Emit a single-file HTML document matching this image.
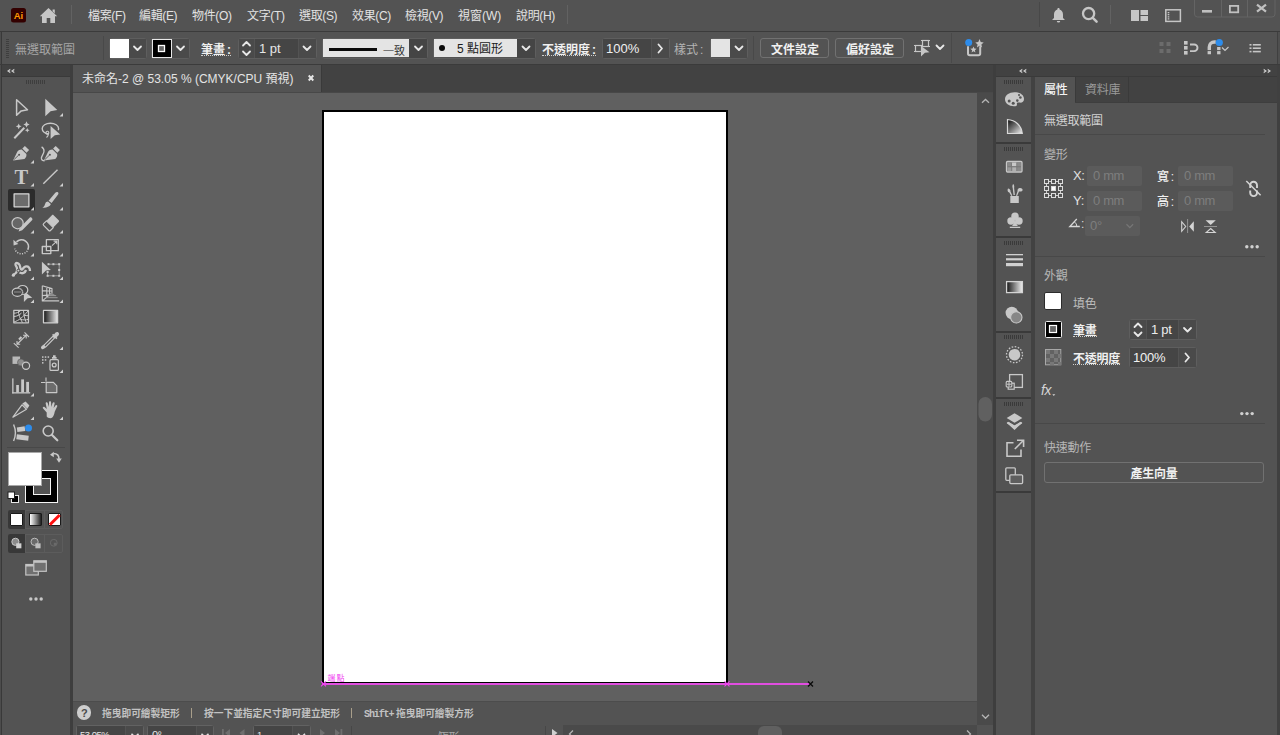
<!DOCTYPE html>
<html lang="zh-Hant">
<head>
<meta charset="utf-8">
<title>未命名-2 @ 53.05 % (CMYK/CPU 預視)</title>
<style>
*{box-sizing:border-box;margin:0;padding:0}
html,body{width:1280px;height:735px;overflow:hidden;background:#535353}
body{position:relative;font-family:"Liberation Sans","Noto Sans CJK TC",sans-serif;font-size:12px;color:#dddddd;line-height:1}
.a{position:absolute}
.t{position:absolute;white-space:nowrap;line-height:14px;height:14px}
svg{position:absolute;overflow:visible}
.sep{position:absolute;width:1px;background:#454545}
.b{font-weight:bold;color:#f0f0f0}
.du{border-bottom:1px dotted #d0d0d0}
.fld{position:absolute;background:#454545}
.btn{position:absolute;background:#4a4a4a}
.grp{position:absolute;border:1px solid #5e5e5e;border-radius:3px}
.chev{position:absolute}
.m{top:9px;color:#e2e2e2;font-size:12px;line-height:15px;height:15px;letter-spacing:-0.35px}
.c{top:43px;font-size:12px}
.du{height:13px}
.col{margin-left:2px}
.cb{border:1px solid #717171;border-radius:3px}
.h{top:707px;font-size:9.72px;font-weight:bold;color:#c2c2c2;line-height:14px}
.s{top:728px;font-size:9.5px;letter-spacing:-0.5px;color:#e6e6e6;line-height:14px}
.st{border:1px solid #626262;border-radius:3px}
.gap{left:996px;width:35px;height:2px;background:#3a3a3a}
.grip{left:1004px;width:20px;height:4px;background:repeating-linear-gradient(to right,#3a3a3a 0,#3a3a3a 1px,transparent 1px,transparent 2px)}
.p{font-size:12px;letter-spacing:-.25px}
.dv{left:1035px;width:230px;height:1px;background:#484848}
.pf{width:55px;height:20px;background:#5b5b5b;border-radius:2px}
.pv{font-size:13px;color:#7e7e7e;letter-spacing:-.35px}
/*SECTIONS*/
</style>
</head>
<body>
<!-- base frames -->
<div class="a" id="menubar" style="left:0;top:0;width:1280px;height:31px;background:#535353"></div>
<div class="a" style="left:0;top:31px;width:1280px;height:1px;background:#3b3b3b"></div>
<div class="a" style="left:0;top:32px;width:1px;height:703px;background:#4c4c4c"></div><div class="a" style="left:1px;top:32px;width:1px;height:703px;background:#393939"></div>
<div class="a" style="left:1277px;top:32px;width:3px;height:703px;background:#404040"></div><div class="a" style="left:1278px;top:32px;width:2px;height:32px;background:#4f4f4f"></div>
<div class="a" id="ctrlbar" style="left:2px;top:32px;width:1275px;height:32px;background:#535353"></div>
<div class="a" style="left:0;top:64px;width:1280px;height:1px;background:#3b3b3b"></div>

<!-- left toolbar -->
<div class="a" style="left:2px;top:65px;width:68px;height:11px;background:#424242"></div>
<div class="a" style="left:2px;top:76px;width:68px;height:1px;background:#3a3a3a"></div>
<div class="a" id="tools" style="left:2px;top:77px;width:68px;height:658px;background:#535353"></div>
<div class="a" style="left:70px;top:65px;width:3px;height:670px;background:#3e3e3e"></div>

<!-- document area -->
<div class="a" style="left:73px;top:65px;width:920px;height:27px;background:#424242"></div>
<div class="a" style="left:73px;top:65px;width:248px;height:27px;background:#535353"></div>
<div class="a" style="left:321px;top:65px;width:1px;height:27px;background:#3a3a3a"></div>
<div class="a" style="left:73px;top:92px;width:920px;height:1px;background:#484848"></div>
<div class="a" id="canvas" style="left:73px;top:93px;width:904px;height:608px;background:#606060"></div>
<div class="a" style="left:977px;top:93px;width:16px;height:632px;background:#4a4a4a"></div>
<div class="a" style="left:73px;top:701px;width:904px;height:1px;background:#4c4c4c"></div>
<div class="a" id="hint" style="left:73px;top:702px;width:904px;height:23px;background:#535353"></div>
<div class="a" id="status" style="left:73px;top:725px;width:904px;height:10px;background:#535353"></div>
<div class="a" style="left:563px;top:725px;width:414px;height:10px;background:#4a4a4a"></div>
<div class="a" style="left:977px;top:725px;width:16px;height:10px;background:#535353"></div>

<!-- artboard -->
<div class="a" style="left:322px;top:110px;width:406px;height:574px;background:#000"></div>
<div class="a" style="left:324px;top:112px;width:402px;height:570px;background:#fff"></div>
<div class="a" style="left:322px;top:682.500px;width:489px;height:2.500px;background:#e04ee0"></div>

<!-- right dock -->
<div class="a" style="left:993px;top:65px;width:3px;height:670px;background:#3e3e3e"></div>
<div class="a" style="left:996px;top:65px;width:281px;height:11px;background:#424242"></div>
<div class="a" style="left:996px;top:76px;width:281px;height:1px;background:#3a3a3a"></div>
<div class="a" id="iconcol" style="left:996px;top:77px;width:35px;height:658px;background:#535353"></div>
<div class="a" style="left:1031px;top:77px;width:4px;height:658px;background:#424242"></div>
<div class="a" id="panel" style="left:1035px;top:77px;width:242px;height:658px;background:#535353"></div>
<div class="a" style="left:1075px;top:77px;width:202px;height:25px;background:#424242"></div>
<div class="a" style="left:1075px;top:77px;width:1px;height:25px;background:#3a3a3a"></div>
<div class="a" style="left:1128px;top:77px;width:1px;height:25px;background:#3a3a3a"></div>
<div class="a" style="left:1075px;top:102px;width:202px;height:1px;background:#3e3e3e"></div>

<!--MENUBAR-->
<div id="menu">
<span class="t m" id="m1" style="left:88px">檔案(F)</span>
<span class="t m" id="m2" style="left:139px">編輯(E)</span>
<span class="t m" id="m3" style="left:192px">物件(O)</span>
<span class="t m" id="m4" style="left:247px">文字(T)</span>
<span class="t m" id="m5" style="left:299px">選取(S)</span>
<span class="t m" id="m6" style="left:352px">效果(C)</span>
<span class="t m" id="m7" style="left:405px">檢視(V)</span>
<span class="t m" id="m8" style="left:458px;letter-spacing:0">視窗(W)</span>
<span class="t m" id="m9" style="left:516px">說明(H)</span>
</div>
<div class="sep" style="left:71px;top:5px;height:19px;background:#626262"></div>
<div class="sep" style="left:567px;top:5px;height:19px;background:#626262"></div>
<div class="sep" style="left:1039px;top:2px;height:25px;background:#484848"></div>
<div class="sep" style="left:1110px;top:5px;height:19px;background:#626262"></div>
<svg width="1280" height="32" viewBox="0 0 1280 32" style="left:0;top:0">
 <rect x="11" y="8" width="15" height="14.5" rx="2.5" fill="#330000"/>
 <text x="18.5" y="18.8" font-family="Liberation Sans, sans-serif" font-size="9.5" font-weight="bold" fill="#ff9a00" text-anchor="middle">Ai</text>
 <path d="M48.5 8 L57.2 16.2 L55 16.2 L55 23 L50.3 23 L50.3 18 L46.7 18 L46.7 23 L42 23 L42 16.2 L39.8 16.2 Z M52.6 9.6 h2.2 v3.8 l-2.2 -2.1z" fill="#c6c6c6"/>
 <!-- bell -->
 <path d="M1058.5 8 c.7 0 1.1 .5 1.1 1.1 v.5 c2.3 .7 3.4 2.7 3.4 5 v3.3 l1.6 1.6 v.6 h-12.2 v-.6 l1.6 -1.6 v-3.3 c0 -2.3 1.1 -4.3 3.4 -5 v-.5 c0 -.6 .4 -1.1 1.1 -1.1z M1056.8 20.9 h3.4 a1.7 1.5 0 0 1 -3.4 0z" fill="#c6c6c6"/>
 <!-- search -->
 <circle cx="1088.6" cy="13.6" r="5.600" fill="none" stroke="#c6c6c6" stroke-width="2.300"/>
 <path d="M1092.8 17.8 L1096.600 21.600" stroke="#c6c6c6" stroke-width="2.500" stroke-linecap="round"/>
 <!-- arrange -->
 <rect x="1131" y="10" width="8" height="11" fill="#c6c6c6"/>
 <rect x="1140.5" y="10" width="7.5" height="5" fill="#c6c6c6"/>
 <rect x="1140.5" y="16" width="7.5" height="5" fill="#c6c6c6"/>
 <!-- workspace -->
 <rect x="1165.8" y="9.8" width="14.6" height="11.6" fill="none" stroke="#c6c6c6" stroke-width="1.5"/>
 <path d="M1168.5 12 v7.5" stroke="#c6c6c6" stroke-width="1.6" stroke-dasharray="1.2 0.9"/>
 <!-- window controls -->
 <path d="M1194.5 -1 V14 a3 3 0 0 0 3 3 H1272 a3 3 0 0 0 3 -3 V-1" fill="none" stroke="#646464" stroke-width="1"/>
 <path d="M1221.5 0 V17 M1247.5 0 V17" stroke="#646464" stroke-width="1"/>
 <rect x="1202" y="10" width="10" height="2.6" fill="#c0c0c0"/>
 <rect x="1229.9" y="5.9" width="8.300" height="6.400" fill="none" stroke="#c0c0c0" stroke-width="1.800"/>
 <path d="M1257 4.6 L1266 11.6 M1266 4.6 L1257 11.6" stroke="#c0c0c0" stroke-width="2.200"/>
</svg>
<!--CTRLBAR-->
<div class="a" style="left:6px;top:39px;width:3px;height:20px;background:repeating-linear-gradient(to bottom,#3e3e3e 0,#3e3e3e 1px,transparent 1px,transparent 2px)"></div>
<span class="t c" id="c1" style="left:15px;color:#a6a6a6">無選取範圍</span>
<div class="sep" style="left:103px;top:36px;height:24px;background:#494949"></div>
<!-- fill -->
<div class="grp" style="left:109px;top:38px;width:38px;height:21px"></div>
<div class="btn" style="left:129px;top:39px;width:17px;height:19px"></div>
<div class="a" style="left:110px;top:39px;width:19px;height:19px;background:#fff"></div>
<!-- stroke -->
<div class="grp" style="left:151px;top:38px;width:39px;height:21px"></div>
<div class="btn" style="left:172px;top:39px;width:17px;height:19px"></div>
<div class="a" style="left:152px;top:39px;width:20px;height:19px;background:#000;border:1px solid #e8e8e8"></div>
<span class="t c b du" id="c2" style="left:201px">筆畫<span class="col">:</span></span>
<!-- weight -->
<div class="grp" style="left:238px;top:38px;width:79px;height:21px"></div>
<div class="btn" style="left:239px;top:39px;width:15px;height:19px"></div>
<div class="fld" style="left:255px;top:39px;width:43px;height:19px"></div>
<div class="btn" style="left:299px;top:39px;width:17px;height:19px"></div>
<span class="t c" id="c3" style="left:259px;top:42px;color:#e6e6e6;font-size:13px">1 pt</span>
<!-- profile -->
<div class="grp" style="left:322px;top:38px;width:106px;height:21px"></div>
<div class="a" style="left:409px;top:39px;width:18px;height:19px;background:#454545"></div>
<div class="a" style="left:323px;top:39px;width:86px;height:18px;background:#e4e4e4"></div>
<div class="a" style="left:329px;top:47.5px;width:48px;height:3.5px;background:#0a0a0a"></div>
<span class="t c" id="c4" style="left:383px;top:44px;color:#333;font-size:11px"><span style="color:#777">一</span>致</span>
<!-- brush -->
<div class="grp" style="left:433px;top:38px;width:103px;height:21px"></div>
<div class="a" style="left:517px;top:39px;width:18px;height:19px;background:#454545"></div>
<div class="a" style="left:434px;top:39px;width:83px;height:18px;background:#e4e4e4"></div>
<div class="a" style="left:439px;top:45px;width:6px;height:6px;border-radius:3px;background:#0a0a0a"></div>
<span class="t c" id="c5" style="left:457px;top:42px;color:#1a1a1a">5 點圓形</span>
<span class="t c b du" id="c6" style="left:542px">不透明度<span class="col">:</span></span>
<!-- opacity -->
<div class="grp" style="left:602px;top:38px;width:68px;height:21px"></div>
<div class="fld" style="left:603px;top:39px;width:48px;height:19px"></div>
<div class="btn" style="left:652px;top:39px;width:17px;height:19px"></div>
<span class="t c" id="c7" style="left:606px;top:42px;color:#f0f0f0;font-size:13px">100%</span>
<span class="t c" id="c8" style="left:674px;color:#b4b4b4">樣式<span class="col">:</span></span>
<!-- style -->
<div class="grp" style="left:710px;top:38px;width:38px;height:21px"></div>
<div class="btn" style="left:730px;top:39px;width:17px;height:19px"></div>
<div class="a" style="left:711px;top:39px;width:19px;height:18px;background:#e4e4e4"></div>
<div class="sep" style="left:753px;top:36px;height:24px;background:#494949"></div>
<div class="a cb" style="left:760px;top:38px;width:69px;height:20px"></div>
<span class="t c b" id="c9" style="left:771px">文件設定</span>
<div class="a cb" style="left:835px;top:38px;width:69px;height:20px"></div>
<span class="t c b" id="c10" style="left:846px">偏好設定</span>
<div class="sep" style="left:951px;top:33px;height:30px;background:#494949"></div>
<svg width="1280" height="64" viewBox="0 0 1280 64" style="left:0;top:0">
 <g fill="none" stroke="#e8e8e8" stroke-width="1.8" stroke-linecap="round" stroke-linejoin="round">
  <path d="M134 46.5 l3.5 3.5 l3.5 -3.5"/>
  <path d="M177 46.5 l3.5 3.5 l3.5 -3.5"/>
  <path d="M303.5 46.5 l3.5 3.5 l3.5 -3.5"/>
  <path d="M415 46.5 l3.5 3.5 l3.5 -3.5"/>
  <path d="M522.5 46.5 l3.5 3.5 l3.5 -3.5"/>
  <path d="M735.5 46.5 l3.5 3.5 l3.5 -3.5"/>
  <path d="M936.5 45.5 l3.5 3.5 l3.5 -3.5"/>
  <path d="M658.5 44.5 l3.5 4 l-3.5 4"/>
  <path d="M243 45.5 l3.5 -3.5 l3.5 3.5"/>
  <path d="M243 51.5 l3.5 3.5 l3.5 -3.5"/>
 </g>
 <rect x="158.5" y="45.5" width="6" height="6" fill="#666" stroke="#fff" stroke-width="1.3"/>
 <!-- select similar icon -->
 <g fill="none" stroke="#c6c6c6" stroke-width="1.2">
  <rect x="922.5" y="40.5" width="6" height="6"/>
  <rect x="915.5" y="45.5" width="6" height="6"/>
  <path d="M914 45.5 h1.5 M914 51.5 h1.5 M921.5 45.5 h1.5 M921 40.5 h1.5 M928.5 40.5 h1.5 M928.5 46.5 h1.5"/>
 </g>
 <path d="M921 46 l8.5 6.2 l-4.6 .6 l-3.9 3.6z" fill="#c6c6c6"/>
 <!-- generate icon -->
 <path d="M968 47 v6.5 a1.8 1.8 0 0 0 1.8 1.8 h8.6 a1.8 1.8 0 0 0 1.8 -1.8 v-6.5" fill="none" stroke="#c6c6c6" stroke-width="2" stroke-linecap="round"/>
 <path d="M979.5 39 l1.2 3 l3 .4 l-2.3 2 l.7 3 l-2.6 -1.6 l-2.6 1.6 l.7 -3 l-2.3 -2 l3 -.4z" fill="#c6c6c6"/>
 <path d="M973.5 46.5 l.9 2.1 l2.2 .2 l-1.7 1.5 l.5 2.2 l-1.9 -1.2 l-1.9 1.2 l.5 -2.2 l-1.7 -1.5 l2.2 -.2z" fill="#c6c6c6"/>
 <circle cx="968.7" cy="42.5" r="3.5" fill="#2d8ceb"/>
 <!-- right icons -->
 <g fill="#6c6c6c">
  <rect x="1159.5" y="42" width="4" height="4"/><rect x="1166.5" y="42" width="4" height="4"/>
  <rect x="1159.5" y="49" width="4" height="4"/><rect x="1166.5" y="49" width="4" height="4"/>
 </g>
 <g fill="#c6c6c6">
  <rect x="1184" y="41" width="3.6" height="3.6"/><rect x="1184" y="46" width="3.6" height="3.6"/><rect x="1184" y="51" width="3.6" height="3.6"/>
 </g>
 <path d="M1190 44.5 h4.2 a3.3 3.3 0 0 1 0 6.6 h-4.2" fill="none" stroke="#c6c6c6" stroke-width="1.9"/>
 <path d="M1209.3 54.3 V47 a5 5 0 0 1 5 -5 h1.5" fill="none" stroke="#c6c6c6" stroke-width="3.4"/>
 <path d="M1218.8 47 V54.3" stroke="#c6c6c6" stroke-width="3.4"/>
 <path d="M1207 50.6 h14" stroke="#535353" stroke-width="1"/>
 <path d="M1222 47.5 l3 3 l3.5 -3.5" fill="none" stroke="#c6c6c6" stroke-width="1.2"/>
 <circle cx="1219.3" cy="42.5" r="3.6" fill="#2d8ceb"/>
 <g fill="#c6c6c6">
  <rect x="1249.5" y="44" width="2" height="1.6"/><rect x="1252.8" y="44" width="8" height="1.6"/>
  <rect x="1249.5" y="47.4" width="2" height="1.6"/><rect x="1252.8" y="47.4" width="8" height="1.6"/>
  <rect x="1249.5" y="50.8" width="2" height="1.6"/><rect x="1252.8" y="50.8" width="8" height="1.6"/>
 </g>
</svg>
<!--TOOLS-->
<div class="a" style="left:26px;top:80px;width:20px;height:4px;background:repeating-linear-gradient(to right,#3e3e3e 0,#3e3e3e 1px,transparent 1px,transparent 2px)"></div>
<div class="a" style="left:8px;top:189px;width:27px;height:22px;border-radius:2px;background:#2c2c2c"></div>
<div class="a" style="left:7px;top:447px;width:58px;height:1px;background:#484848"></div>
<!-- fill / stroke -->
<div class="a" style="left:25px;top:470px;width:33px;height:33px;background:#000;border:1px solid #f4f4f4"></div>
<div class="a" style="left:33px;top:478px;width:18px;height:17px;background:#535353;border:1px solid #f4f4f4"></div>
<div class="a" style="left:7.500px;top:451.500px;width:34px;height:34px;background:#fff;border:1px solid #a8a8a8"></div>
<!-- mode buttons -->
<div class="a" style="left:8px;top:510px;width:55px;height:19px;border:1px solid #5c5c5c;border-radius:2px"></div>
<div class="a" style="left:8px;top:510px;width:17px;height:19px;background:#383838;border-radius:2px 0 0 2px"></div>
<div class="a" style="left:25px;top:511px;width:1px;height:17px;background:#5c5c5c"></div>
<div class="a" style="left:44px;top:511px;width:1px;height:17px;background:#5c5c5c"></div>
<div class="a" style="left:10px;top:513px;width:13px;height:13px;background:#fff;border:1px solid #1a1a1a;border-radius:1px"></div>
<div class="a" style="left:29px;top:513px;width:13px;height:13px;background:linear-gradient(to right,#fff,#222);border:1px solid #1a1a1a;border-radius:1px"></div>
<div class="a" style="left:48px;top:513px;width:13px;height:13px;background:#fff;border:1px solid #1a1a1a;border-radius:1px"></div>
<div class="a" style="left:8px;top:534px;width:55px;height:19px;border:1px solid #5c5c5c;border-radius:2px"></div>
<div class="a" style="left:8px;top:534px;width:17px;height:19px;background:#383838;border-radius:2px 0 0 2px"></div>
<div class="a" style="left:25px;top:535px;width:1px;height:17px;background:#5c5c5c"></div>
<div class="a" style="left:44px;top:535px;width:1px;height:17px;background:#5c5c5c"></div>
<svg width="74" height="735" viewBox="0 0 74 735" style="left:0;top:0">
 <g fill="#cfcfcf"><path d="M10.300 68.700 l-3.300 2.300 l3.300 2.300 v-1.500 l-1.200 -.8 l1.200 -.8z M14.300 68.700 l-3.300 2.300 l3.300 2.300 v-1.500 l-1.200 -.8 l1.200 -.8z"/></g>
 <g id="tri" fill="#d0d0d0">
  <path d="M63 113 v3.5 h-3.5z"/>
  <path d="M34 160 v3.5 h-3.5z"/>
  <path d="M34 183 v3.5 h-3.5z"/><path d="M63 183 v3.5 h-3.5z"/>
  <path d="M34 207 v3.5 h-3.5z"/><path d="M63 207 v3.5 h-3.5z"/>
  <path d="M34 230 v3.5 h-3.5z"/><path d="M63 230 v3.5 h-3.5z"/>
  <path d="M34 253 v3.5 h-3.5z"/><path d="M63 253 v3.5 h-3.5z"/>
  <path d="M34 276.5 v3.5 h-3.5z"/><path d="M63 276.5 v3.5 h-3.5z"/>
  <path d="M34 299.5 v3.5 h-3.5z"/><path d="M63 299.5 v3.5 h-3.5z"/>
  <path d="M63 346.5 v3.5 h-3.5z"/>
  <path d="M63 369.5 v3.5 h-3.5z"/>
  <path d="M34 393 v3.5 h-3.5z"/>
  <path d="M34 416.5 v3.5 h-3.5z"/><path d="M63 416.5 v3.5 h-3.5z"/>
 </g>
 <g fill="#c8c8c8" stroke="none">
  <!-- direct select -->
  <path d="M45.3 98.8 L57.3 110 L50.6 111.2 L45.3 116.2 Z"/>
  <!-- lasso arrow -->
  <path d="M50.6 126 L60.2 134.6 L54.8 135.2 L50.6 139 Z"/>
  <!-- pen -->
  <path d="M13.1 160.5 L17.3 151.7 C18.5 150.2 20.5 149.3 22 149.7 L26.3 154 C26.8 155.8 26 157.6 24.5 158.9 Z"/>
  <path d="M22.3 148.5 L24.9 145.9 L29.1 150.1 L26.5 152.7 Z"/>
  <path d="M14.2 159.4 L18.6 155.2" stroke="#535353" stroke-width=".9"/><circle cx="19.1" cy="154.8" r="1" fill="#535353"/>
  <!-- curvature pen -->
  <g transform="translate(30.8 0)"><path d="M13.1 160.5 L17.3 151.7 C18.5 150.2 20.5 149.3 22 149.7 L26.3 154 C26.8 155.8 26 157.6 24.5 158.9 Z"/>
  <path d="M22.3 148.5 L24.9 145.9 L29.1 150.1 L26.5 152.7 Z"/>
  <path d="M14.2 159.4 L18.6 155.2" stroke="#535353" stroke-width=".9"/><circle cx="19.1" cy="154.8" r="1" fill="#535353"/></g>
  <!-- T -->
  <text x="21.4" y="183.8" text-anchor="middle" font-family="Liberation Serif, serif" font-size="20.5" font-weight="bold" fill="#c8c8c8">T</text>
  <!-- brush -->
  <path d="M57.9 192.2 c.8 .6 .6 1.8 0 2.6 L51.6 203 L48.6 200.7 L55.3 192.7 c.7 -.8 1.8 -1.1 2.6 -.5z"/>
  <path d="M48 201.6 L50.8 203.9 c-.6 2.2 -2.6 3.5 -8.4 3.8 c2.200 -1.300 2.300 -2.800 2.900 -4.200 c.5 -1.200 1.500 -1.900 2.700 -1.900z"/>
  <!-- shaper pencil -->
  <path d="M18.600 231.500 L19.800 227.700 L29.600 217.800 c.6 -.6 1.400 -.6 2 0 l.4 .4 c.6 .6 .6 1.400 0 2 L22.200 230.200 Z"/>
  <!-- eraser top -->
  <path d="M51.900 215.200 c.5 -.5 1.200 -.5 1.700 0 L58.700 220.300 c.5 .5 .5 1.200 0 1.700 L53.300 227.600 L46.500 220.800 Z"/>
  <!-- free transform arrow -->
  <path d="M41.900 261.700 L50.900 269.900 L46 270.600 L41.900 274.600 Z"/>
  <!-- shape builder arrow -->
  <path d="M23.900 290.900 L32.300 297.700 L27.600 298.300 L23.900 301.900 Z"/>
  <!-- eyedropper bulb -->
  <path d="M55.600 332.600 c1.200 -1.200 2.900 -.6 3.300 .6 c.4 1.100 -.2 2 -1 2.800 l-1.200 1.200 l.8 .8 l-1.200 1.200 l-4.300 -4.300 l1.200 -1.200 l.8 .8z"/>
  <!-- symbol sprayer nozzle -->
  <path d="M52 358.800 v-1.800 h1 v-1.700 h2.600 v1.700 h1 v1.800z"/>
  <rect x="42" y="356.300" width="1.500" height="1.500"/><rect x="44.800" y="356.300" width="1.500" height="1.500"/><rect x="47.600" y="356.300" width="1.500" height="1.500"/>
  <rect x="42" y="359.200" width="1.500" height="1.500"/><rect x="44.800" y="359.200" width="1.500" height="1.500"/>
  <rect x="42" y="362.100" width="1.500" height="1.500"/>
  <!-- graph -->
  <rect x="12.200" y="378.400" width="1.300" height="15"/><rect x="12.200" y="392.200" width="18" height="1.300"/>
  <rect x="16.200" y="385" width="2.700" height="7.500"/><rect x="21.200" y="379.400" width="2.800" height="13"/><rect x="26.200" y="381.900" width="2.800" height="10.500"/>
  <!-- slice handle -->
  <path d="M22.300 403.600 L25.600 401.500 L29.400 405.500 L27.300 408.700 Z"/>
  <!-- hand -->
  <path d="M46.700 412.500 l-3.600 -4 c-.9 -1 .4 -2.300 1.400 -1.500 l2.300 1.900 l-1.100 -5.300 c-.3 -1.400 1.600 -1.900 2 -.5 l1.200 3.900 l.1 -4.600 c0 -1.400 2.100 -1.400 2.100 0 l.2 4.500 l1.300 -3.900 c.5 -1.300 2.300 -.7 2 .6 l-1 4.500 l1.900 -2.600 c.8 -1.100 2.300 -.1 1.700 1.100 l-2.400 4.900 c-.6 2.700 -1.400 6.700 -4.300 6.700 c-2 0 -2.900 -.5 -3.800 -1.700z"/>
  <!-- discover -->
  <path d="M16.800 427.400 L24.600 426.200 L25.300 430.900 L17.400 432.100 Z"/>
  <path d="M16.900 434.300 L28.800 435.700 L28.200 440.700 L16.300 439.200 Z"/>
  <!-- blend -->
  <rect x="12.500" y="356.500" width="7.600" height="7.400" fill="#b8b8b8"/>
  <circle cx="21" cy="362.400" r="3.500" fill="#8c8c8c" stroke="#535353" stroke-width=".6"/>
 </g>
 <g fill="none" stroke="#c8c8c8" stroke-width="1.300" stroke-linejoin="round">
  <!-- selection -->
  <path d="M16.600 99.800 L27.500 109.700 L21.200 110.900 L16.600 115.300 Z" stroke-width="1.500"/>
  <!-- wand -->
  <path d="M14.300 138.200 L24.300 127.800" stroke-width="2"/>
  <!-- lasso -->
  <path d="M49 134 c-4 -.6 -6.800 -2.800 -6.800 -5.500 c0 -3 3.700 -5.200 8.200 -5.200 c4.500 0 8.200 2.200 8.200 5.200 c0 .6 -.1 1.100 -.4 1.600" stroke-width="1.400"/>
  <path d="M48.400 133.800 a1.400 1.500 0 1 0 -.100 .100 c.2 1.300 -.6 2.600 -1.800 3.600" stroke-width="1.100"/>
  <!-- curvature line -->
  <path d="M41.6 146.9 c1.600 1 2.600 2.200 2.400 4.400 c-.2 2.400 -2.400 4.600 -2.600 6.800 c-.1 1.800 1.300 2.700 3.200 2.700" stroke-width="1.300"/>
  <!-- line -->
  <path d="M43.300 183.800 L57.500 169.800" stroke-width="1.400"/>
  <!-- rect -->
  <rect x="14.100" y="193.800" width="14.800" height="13" fill="#6c6c6c" stroke="#d6d6d6"/>
  <!-- shaper circle -->
  <circle cx="17.600" cy="223.200" r="5.600" stroke-width="1.200" fill="#666"/>
  <!-- eraser sleeve -->
  <path d="M46.500 220.800 L53.300 227.600 L50.400 230.500 c-.5 .5 -1.200 .5 -1.700 0 L43.600 225.400 c-.5 -.5 -.5 -1.200 0 -1.700 Z" stroke-width="1.200"/>
  <!-- rotate -->
  <path d="M16.55 241.85 A7 7 0 0 1 27.84 249.76" stroke-width="1.700"/>
  <path d="M27.23 250.82 A7 7 0 0 1 14.74 248.61" stroke-width="1.500" stroke-dasharray="1.100 1.400"/>
  <path d="M13.4 239.7 L18.3 243.9 L13.6 245.4 Z" fill="#c8c8c8" stroke="none"/>
  <!-- scale -->
  <rect x="46.4" y="239.600" width="11.900" height="11.100" fill="#484848"/>
  <rect x="42.3" y="246.500" width="8.500" height="7.100" stroke-width="1.400"/>
  <path d="M52 245.600 L56.600 241.300 M53.600 241.100 H56.800 V244.300" stroke-width="1.100"/>
  <!-- width/warp -->
  <path d="M13 274.800 c3 -1 4.500 -3.500 4 -6.500 c-.4 -2.500 -2 -3 -1.500 -4.500 c.6 -1.600 3 -.8 4 1 c1 1.800 .5 4.500 2 4.800 c1.500 .3 1.500 -2.800 4.500 -3.200 c2.500 -.3 4 1.500 4 4.500" stroke-width="2.300"/>
  <path d="M19.500 272.500 c3 1.500 5.500 .5 6.500 -2.500" stroke-width="2.400"/>
  <circle cx="13.400" cy="275.200" r="1.600" fill="#c8c8c8" stroke="none"/>
  <circle cx="18.400" cy="270.600" r="1.400" stroke-width="1" stroke="#535353" fill="#c8c8c8"/>
  <!-- free transform box -->
  <path d="M48.200 264.200 H59.200 V275.800 H47.600 V271.800" stroke-width=".9" stroke="#a8a8a8"/>
  <g fill="#c8c8c8" stroke="none"><rect x="58.200" y="263.200" width="2" height="2"/><rect x="58.200" y="274.800" width="2" height="2"/><rect x="46.600" y="274.800" width="2" height="2"/><rect x="52.400" y="263.200" width="2" height="2"/><rect x="52.400" y="274.800" width="2" height="2"/><rect x="58.200" y="269" width="2" height="2"/><rect x="46.600" y="271" width="2" height="2"/><rect x="47.500" y="263.200" width="2" height="2"/></g>
  <!-- shape builder -->
  <ellipse cx="22.600" cy="290" rx="5.200" ry="4.500" stroke-width="1.200" fill="#484848"/>
  <ellipse cx="17.400" cy="292.200" rx="5.200" ry="4.100" stroke-width="1.200" fill="#484848"/>
  <path d="M18.500 288.400 a5.200 4.500 0 0 1 4.300 5.800" stroke-width=".9" stroke="#8a8a8a"/>
  <path d="M14 292 H21" stroke-width=".9" stroke="#9a9a9a"/>
  <!-- perspective grid -->
  <path d="M42.300 285.700 V300.900 H59.200 M42.300 285.700 L52 288.600 V292.800 L42.300 300.900 M46.800 287.100 V297 M49.600 287.900 V294.700 M42.300 290.600 L52 291 M42.300 295.600 L49 295" stroke-width="1.100"/>
  <path d="M52 292.800 L55.500 295.600 H48 Z" fill="#8a8a8a" stroke="none"/>
  <path d="M48.500 295.700 H56.200 M46 297.700 H57.600" stroke-width=".9" stroke="#a0a0a0"/>
  <!-- mesh -->
  <rect x="13.800" y="310.400" width="14.600" height="12.400" fill="#404040"/>
  <path d="M14 322 C19 320.500 23 317 28 311 M14 316.500 C17 316.300 19.500 315 21.500 313 M18.300 310.500 C18.500 314.500 19.800 318.500 22.500 322.600 M23.500 310.500 c.3 4.500 1.200 8.500 2.800 12 M14 313.200 c2.500 0 4.500 -.8 6.500 -2.500 M20.500 319.300 c3 .9 5.500 .8 8 0 M23.800 315 c1.500 .7 3 .8 4.500 .5" stroke-width="1"/>
  <!-- gradient -->
  <rect x="43.500" y="310.400" width="14.100" height="12.400" fill="url(#gt)" stroke="#d0d0d0"/>
  <!-- measure -->
  <path d="M17.300 344 L26 335.300 M13.800 343.200 L18.600 347.600 M24.500 332.400 L29 337 M17 341 v3.200 h3.200 M23 335.200 h3.200 v3.200" stroke-width="1.100"/>
  <path d="M19 339.500 l2.500 -2.500" stroke-width="2.200"/>
  <!-- eyedropper body -->
  <path d="M53.600 337.300 L45.200 345.700 L42.800 347.400" stroke-width="3.600" stroke-linecap="round"/>
  <path d="M53 337.900 L45.400 345.500" stroke-width="1.300" stroke="#535353" stroke-linecap="round"/>
  <!-- blend circle -->
  <circle cx="26" cy="365.700" r="3.600" stroke-width="1.200" fill="#535353"/>
  <!-- sprayer can -->
  <rect x="50" y="359.700" width="8.400" height="10.700" rx="1" stroke-width="1.200"/>
  <circle cx="54.200" cy="365" r="1.900" stroke-width="1.300"/>
  <!-- artboard -->
  <path d="M46 377.600 V381.500 M41 382.500 H45.500" stroke-width="1.100"/>
  <path d="M46.200 382.400 H53.400 L56.800 385.800 V392.600 H46.200 Z" fill="#6c6c6c" stroke-width="1.200"/>
  <!-- slice blade -->
  <path d="M12.900 417.200 L22 404.800 L26.500 409.200 Z" stroke-width="1.200"/>
  <!-- discover curve -->
  <path d="M13.600 424.500 c2.400 5.500 2.400 11 0 16.500" stroke-width="1.400"/>
  <!-- zoom -->
  <circle cx="48.200" cy="431" r="5" stroke-width="1.600"/>
  <path d="M52 435 L57.300 440.300" stroke-width="2.200" stroke-linecap="round"/>
 </g>
 <!-- wand sparkles -->
  <g fill="#c8c8c8">
  <path d="M18.700 123.400 l.9 2 l2 .9 l-2 .9 l-.9 2 l-.9 -2 l-2 -.9 l2 -.9z"/>
  <path d="M26.500 121.300 l1 2.100 l2.100 1 l-2.100 1 l-1 2.100 l-1 -2.100 l-2.100 -1 l2.100 -1z"/>
  <path d="M27.300 128 l.7 1.600 l1.600 .7 l-1.600 .7 l-.7 1.600 l-.7 -1.600 l-1.600 -.7 l1.600 -.7z"/>
 </g>
 <circle cx="28.500" cy="428.100" r="3.500" fill="#2d8ceb"/>
 <defs><linearGradient id="gt" x1="0" x2="1" y1="0" y2="0"><stop offset="0" stop-color="#141414"/><stop offset="1" stop-color="#e8e8e8"/></linearGradient></defs>
  <!-- swap arrow -->
 <path d="M53.500 453.500 c3.500 0 5.500 2 5.500 5.500" fill="none" stroke="#c8c8c8" stroke-width="1.600"/>
 <path d="M50 454.800 L53.800 451.800 V457.200 Z M56.200 458.600 H61.800 L59 462.800 Z" fill="#c8c8c8"/>
 <!-- default fill/stroke -->
 <rect x="11.500" y="495.500" width="7" height="7" fill="#000" stroke="#e8e8e8" stroke-width="1"/>
 <rect x="8" y="492" width="6.500" height="6.500" fill="#fff" stroke="#222" stroke-width="1"/>
 <!-- none slash -->
 <path d="M49.900 524.700 L59.600 515" stroke="#ff1010" stroke-width="3"/>
 <!-- draw modes -->
 <circle cx="15.400" cy="541.800" r="3.600" fill="#8a8a8a" stroke="#c8c8c8" stroke-width="1"/>
 <rect x="16.200" y="543.300" width="5.200" height="5" fill="#d0d0d0"/>
 <circle cx="34.600" cy="541.800" r="3.600" fill="#6a6a6a" stroke="#bdbdbd" stroke-width="1"/>
 <rect x="35.400" y="543.300" width="5.200" height="5" fill="#bdbdbd"/>
 <circle cx="53.800" cy="542.800" r="3.400" fill="none" stroke="#6a6a6a" stroke-width="1"/>
 <path d="M53.800 542.800 h3 a3 3 0 0 1 -3 3z" fill="#6a6a6a"/>
 <!-- screen mode -->
 <rect x="25.800" y="564.500" width="12.500" height="10.500" fill="#707070" stroke="#c4c4c4" stroke-width="1.200"/>
 <rect x="25.800" y="564.500" width="12.500" height="2" fill="#c4c4c4"/>
 <rect x="33.800" y="560.800" width="12.500" height="10.500" fill="#707070" stroke="#c4c4c4" stroke-width="1.200"/>
 <rect x="33.800" y="560.800" width="12.500" height="2" fill="#c4c4c4"/>
 <!-- dots -->
 <circle cx="30.800" cy="599" r="1.700" fill="#c8c8c8"/><circle cx="36" cy="599" r="1.700" fill="#c8c8c8"/><circle cx="41.200" cy="599" r="1.700" fill="#c8c8c8"/>
</svg>
<!--DOC-->
<span class="t" id="d1" style="left:82px;top:72px;color:#e4e4e4;font-size:12px;line-height:15px;height:15px">未命名-2 @ 53.05 % (CMYK/CPU 預視)</span>
<span class="t" id="d2" style="left:327.500px;top:674.500px;color:#f040f0;font-size:8px;letter-spacing:1px;line-height:8px;height:8px">端點</span>
<!-- hint bar -->
<div class="a" style="left:77.200px;top:705.300px;width:14.300px;height:14.300px;border-radius:7.200px;background:#cdcdcd"></div>
<span class="t" id="d3" style="left:81px;top:706px;width:6px;color:#4a4a4a;font-size:11px;font-weight:bold;line-height:14px;text-align:center">?</span>
<span class="t h" id="h1" style="left:102px">拖曳即可繪製矩形</span>
<div class="a" style="left:191px;top:708px;width:1px;height:10px;background:#a89e8a"></div>
<span class="t h" id="h2" style="left:204px">按一下並指定尺寸即可建立矩形</span>
<div class="a" style="left:351px;top:708px;width:1px;height:10px;background:#a89e8a"></div>
<span class="t h" id="h3" style="left:364px"><span style="font-family:'Liberation Mono',monospace;font-weight:bold;font-size:10px;letter-spacing:-1.1px">Shift+</span></span>
<span class="t h" id="h4" style="left:396px">拖曳即可繪製方形</span>
<!-- status row -->
<div class="a st" style="left:76px;top:725px;width:68px;height:14px"></div>
<div class="fld" style="left:77px;top:726px;width:48px;height:12px"></div>
<div class="btn" style="left:126px;top:726px;width:17px;height:12px"></div>
<span class="t s" id="s1" style="left:80px">53.05%</span>
<div class="a st" style="left:147px;top:725px;width:67px;height:14px"></div>
<div class="fld" style="left:148px;top:726px;width:48px;height:12px"></div>
<div class="btn" style="left:197px;top:726px;width:16px;height:12px"></div>
<span class="t s" id="s2" style="left:152px;top:728px;font-size:11px">0°</span>
<div class="a st" style="left:253px;top:725px;width:58px;height:14px"></div>
<div class="fld" style="left:254px;top:726px;width:38px;height:12px"></div>
<div class="btn" style="left:293px;top:726px;width:17px;height:12px"></div>
<span class="t s" id="s3" style="left:257px">1</span>
<span class="t s" id="s4" style="left:438px;color:#a8a8a8;font-size:11px;top:730px">矩形</span>
<div class="a" style="left:351px;top:726px;width:1px;height:10px;background:#474747"></div>
<div class="a" style="left:545px;top:726px;width:1px;height:10px;background:#474747"></div>
<svg width="1280" height="735" viewBox="0 0 1280 735" style="left:0;top:0">
 <path d="M308.700 75.500 L313.300 80.500 M313.300 75.500 L308.700 80.500" stroke="#e6e6e6" stroke-width="1.900"/>
 <!-- anchor marks -->
 <path d="M724.500 681.300 L729.500 686.300 M729.500 681.300 L724.500 686.300" stroke="#f040f0" stroke-width="1.100"/>
 <path d="M321 681.300 L326 686.300 M321 686.300 L326 681.300" stroke="#f040f0" stroke-width="1.100"/>
 <path d="M808 681.500 L813 686.500 M813 681.500 L808 686.500" stroke="#0a0a0a" stroke-width="1.300"/>
 <!-- v scrollbar -->
 <path d="M982 102.800 L985.500 99.500 L989 102.800" fill="none" stroke="#b4b4b4" stroke-width="1.300"/>
 <path d="M982 714.800 L985.500 718.300 L989 714.800" fill="none" stroke="#b4b4b4" stroke-width="1.300"/>
 <rect x="978.500" y="397" width="13.500" height="24.500" rx="6.700" fill="#606060"/>
 <!-- h scrollbar -->
 <rect x="758" y="726" width="24" height="14" rx="6" fill="#606060"/>
 <path d="M573 730.500 L569.500 734 L573 737.500" fill="none" stroke="#b4b4b4" stroke-width="1.300"/>
 <path d="M967 730.500 L970.500 734 L967 737.500" fill="none" stroke="#b4b4b4" stroke-width="1.300"/>
 <!-- nav -->
 <g fill="#6e6e6e"><rect x="222" y="729" width="1.800" height="8"/><path d="M230 729 v8 l-5 -4z"/><path d="M244.500 729 v8 l-5 -4z"/>
 <path d="M320 729 v8 l5 -4z"/><path d="M335 729 v8 l5 -4z"/><rect x="340.500" y="729" width="1.800" height="8"/></g>
 <path d="M552 729 v8 l5.500 -4z" fill="#d0d0d0"/>
 <g fill="none" stroke="#e0e0e0" stroke-width="1.600"><path d="M131.500 733.800 l3.500 3.500 l3.500 -3.500"/><path d="M201.500 733.800 l3.500 3.500 l3.500 -3.500"/><path d="M298 733.800 l3.500 3.500 l3.500 -3.500"/></g>
</svg>
<!--DOCK-->
<div class="a gap" style="top:142px"></div>
<div class="a gap" style="top:236px"></div>
<div class="a gap" style="top:331px"></div>
<div class="a gap" style="top:397px"></div>
<div class="a gap" style="top:491px"></div>
<div class="a grip" style="top:80px"></div>
<div class="a grip" style="top:147px"></div>
<div class="a grip" style="top:241px"></div>
<div class="a grip" style="top:335px"></div>
<div class="a grip" style="top:402px"></div>
<svg width="1280" height="735" viewBox="0 0 1280 735" style="left:0;top:0">
 <defs>
  <linearGradient id="g2" x1="0" x2="1" y1="0" y2="0"><stop offset="0" stop-color="#141414"/><stop offset="1" stop-color="#f0f0f0"/></linearGradient>
  <linearGradient id="g3" x1="0" x2="1" y1="0" y2="1"><stop offset="0" stop-color="#0a0a0a"/><stop offset=".5" stop-color="#777"/><stop offset="1" stop-color="#f4f4f4"/></linearGradient>
 </defs>
 <g fill="#cfcfcf"><path d="M1022.300 68.700 l-3.300 2.300 l3.300 2.300 v-1.500 l-1.200 -.8 l1.200 -.8z M1026.300 68.700 l-3.300 2.300 l3.300 2.300 v-1.500 l-1.200 -.8 l1.200 -.8z"/>
 <path d="M1263.700 68.700 l3.300 2.300 l-3.300 2.300 v-1.500 l1.200 -.8 l-1.200 -.8z M1267.700 68.700 l3.300 2.300 l-3.300 2.300 v-1.500 l1.200 -.8 l-1.200 -.8z"/></g>
 <!-- palette -->
 <path d="M1014.500 92.300 c5.500 0 9.500 2.800 9.500 6.700 c0 3 -2.500 4.200 -4.500 3.600 c-1.800 -.5 -3 .3 -2.600 1.700 c.3 1.200 -.8 2 -2.900 2 c-5.200 0 -9 -3 -9 -7 c0 -3.900 4 -7 9.500 -7z" fill="#c8c8c8"/>
 <g fill="#535353"><circle cx="1009.200" cy="101" r="1.500"/><circle cx="1013.200" cy="103.300" r="1.500"/><circle cx="1017.300" cy="100.600" r="1.300"/><circle cx="1020.400" cy="97.500" r="1.300"/><circle cx="1019" cy="95" r="1"/></g>
 <!-- color guide -->
 <path d="M1007.500 133.500 V119.500 c8 .5 14 6 14.800 14 Z" fill="url(#g3)" stroke="#d8d8d8" stroke-width="1.200"/>
 <!-- swatches -->
 <rect x="1006.500" y="161.500" width="15.500" height="10.500" rx="1" fill="#777" stroke="#c8c8c8" stroke-width="1.300"/>
 <g fill="#c8c8c8"><rect x="1012" y="162.500" width="4.300" height="3.600"/><rect x="1007.500" y="167.300" width="3.800" height="3.700" fill="#9a9a9a"/><rect x="1012.200" y="167.300" width="4.100" height="3.700" fill="#b0b0b0"/><rect x="1017.200" y="167.300" width="3.800" height="3.700" fill="#8a8a8a"/><rect x="1007.500" y="162.500" width="3.800" height="3.700" fill="#8a8a8a"/><rect x="1017.200" y="162.500" width="3.800" height="3.700" fill="#8a8a8a"/></g>
 <!-- brushes -->
 <g fill="#c8c8c8"><rect x="1010.300" y="196" width="8.500" height="7"/>
 <path d="M1013.200 184 c1 1 1.300 2.600 .9 4 l.8 7 h-1.400 l-.8 -7 c-.6 -1.400 -.3 -3 .5 -4z"/>
 <path d="M1008 188.500 c1.600 0 2.700 1.400 2.500 3 l1.800 4 l-1 .5 l-2 -3.600 c-1.700 -.4 -2.200 -2 -1.300 -3.900z"/>
 <path d="M1022.600 190.300 c.4 -1.600 -1.800 -2.900 -3.600 -2 c-1.400 .7 -1.600 2 -1.400 2.600 l-1.600 4.900 l1.100 .3 l1.900 -4.700 c1.500 .3 3.200 .2 3.600 -1.100z"/></g>
 <!-- symbols (club) -->
 <g fill="#c8c8c8"><circle cx="1015" cy="216.200" r="3.700"/><circle cx="1011" cy="221" r="3.700"/><circle cx="1019" cy="221" r="3.700"/>
 <path d="M1014.300 219 h1.400 c0 3.500 .8 5.500 2.300 7 h-6 c1.500 -1.500 2.300 -3.500 2.300 -7z"/><rect x="1009.800" y="226.700" width="10.400" height="1.300"/></g>
 <!-- stroke -->
 <g fill="#d0d0d0"><rect x="1006" y="254" width="17" height="1.300"/><rect x="1006" y="258.200" width="17" height="2.200"/><rect x="1006" y="263" width="17" height="3.200"/></g>
 <!-- gradient -->
 <rect x="1006.600" y="281.600" width="15.800" height="11" fill="url(#g2)" stroke="#d4d4d4" stroke-width="1.300"/>
 <!-- transparency -->
 <circle cx="1011.800" cy="313" r="6.200" fill="#c8c8c8"/>
 <circle cx="1016.300" cy="317.300" r="5.700" fill="#868686" stroke="#c8c8c8" stroke-width="1.100"/>
 <!-- appearance -->
 <circle cx="1014.500" cy="354.700" r="5.800" fill="#c8c8c8"/>
 <circle cx="1014.500" cy="354.700" r="8" fill="none" stroke="#c8c8c8" stroke-width="1.300" stroke-dasharray="1.600 1.540"/>
 <!-- graphic styles -->
 <rect x="1009.600" y="374.600" width="12.800" height="12.800" fill="none" stroke="#c8c8c8" stroke-width="1.300"/>
 <rect x="1008.200" y="383.200" width="6" height="6" fill="#535353" stroke="#c8c8c8" stroke-width="1.200"/>
 <rect x="1006.200" y="381.400" width="5.600" height="5.600" rx="1" fill="#535353" stroke="#c8c8c8" stroke-width="1.100"/>
 <path d="M1009 382 v4.500 M1006.800 384.200 h4.500" stroke="#c8c8c8" stroke-width="1"/>
 <!-- layers -->
 <path d="M1014.500 413.200 L1022.300 418 L1014.500 422.800 L1006.700 418 Z" fill="#c8c8c8"/>
 <path d="M1008.600 422 L1014.500 425.600 L1020.400 422 L1022.300 423.200 L1014.500 428.200 L1006.700 423.200 Z" fill="#c8c8c8"/>
 <path d="M1008.200 421.800 L1014.500 425.600 L1020.800 421.800 L1022.300 422.700 L1014.500 430 L1006.700 422.700 Z" fill="#c8c8c8"/>
 <!-- asset export -->
 <path d="M1013.500 442.800 H1007 V456.300 H1021 V449.500" fill="none" stroke="#c8c8c8" stroke-width="1.600"/>
 <path d="M1014.800 449 L1022.800 441" stroke="#c8c8c8" stroke-width="1.600"/>
 <path d="M1017 440.300 H1023.600 V447" fill="none" stroke="#c8c8c8" stroke-width="1.600"/>
 <!-- artboards -->
 <rect x="1005.800" y="467.800" width="9.500" height="12.500" rx="1" fill="#535353" stroke="#c8c8c8" stroke-width="1.300"/>
 <rect x="1009.800" y="474.800" width="12.800" height="8.800" rx="1" fill="#5e5e5e" stroke="#c8c8c8" stroke-width="1.300"/>
</svg>
<!--PANEL-->
<span class="t p" id="p1" style="left:1044px;top:83px;color:#f4f4f4;font-weight:500">屬性</span>
<span class="t p" id="p2" style="left:1085px;top:83px;color:#9a9a9a">資料庫</span>
<span class="t p" id="p3" style="left:1044px;top:114px;color:#d2d2d2">無選取範圍</span>
<div class="a dv" style="top:134px"></div>
<span class="t p" id="p4" style="left:1044px;top:148px;color:#b6b6b6">變形</span>
<span class="t p" id="p5" style="left:1073px;top:169px;color:#e0e0e0;font-size:13px;letter-spacing:-.3px">X:</span>
<span class="t p" id="p6" style="left:1073px;top:194px;color:#e0e0e0;font-size:13px;letter-spacing:-.3px">Y:</span>
<span class="t p b" id="p7" style="left:1157px;top:170px;font-weight:500">寬<span class="col">:</span></span>
<span class="t p b" id="p8" style="left:1157px;top:195px;font-weight:500">高<span class="col">:</span></span>
<div class="a pf" style="left:1087px;top:165.500px"></div>
<div class="a pf" style="left:1087px;top:190.500px"></div>
<div class="a pf" style="left:1178px;top:165.500px"></div>
<div class="a pf" style="left:1178px;top:190.500px"></div>
<div class="a pf" style="left:1085px;top:215.500px"></div>
<span class="t pv" id="v1" style="left:1093px;top:169px">0 mm</span>
<span class="t pv" id="v2" style="left:1093px;top:194px">0 mm</span>
<span class="t pv" id="v3" style="left:1184px;top:169px">0 mm</span>
<span class="t pv" id="v4" style="left:1184px;top:194px">0 mm</span>
<span class="t pv" id="v5" style="left:1090px;top:219px">0°</span>
<span class="t p" id="p9" style="left:1081px;top:217px;color:#d8d8d8">:</span>
<div class="a dv" style="top:256px"></div>
<span class="t p" id="p10" style="left:1044px;top:269px;color:#b6b6b6">外觀</span>
<div class="a" style="left:1044px;top:292px;width:18px;height:18px;background:#fff;border:1px solid #2c2c2c;border-radius:2px"></div>
<span class="t p" id="p11" style="left:1073px;top:297px;color:#bcbcbc">填色</span>
<div class="a" style="left:1044.500px;top:320.500px;width:17px;height:17px;background:#000;border:1px solid #f0f0f0;border-radius:1.500px"></div>
<span class="t p b du" id="p12" style="left:1073px;top:324px">筆畫</span>
<div class="grp" style="left:1129px;top:319px;width:68px;height:21px"></div>
<div class="btn" style="left:1130px;top:320px;width:16px;height:19px"></div>
<div class="fld" style="left:1147px;top:320px;width:31px;height:19px"></div>
<div class="btn" style="left:1179px;top:320px;width:17px;height:19px"></div>
<span class="t p" id="p13" style="left:1151px;top:323px;color:#ececec;font-size:13px">1 pt</span>
<span class="t p b du" id="p14" style="left:1073px;top:352px">不透明度</span>
<div class="grp" style="left:1129px;top:347px;width:68px;height:21px"></div>
<div class="fld" style="left:1130px;top:348px;width:48px;height:19px"></div>
<div class="btn" style="left:1179px;top:348px;width:17px;height:19px"></div>
<span class="t p" id="p15" style="left:1133px;top:351px;color:#f2f2f2;font-size:13px">100%</span>
<span class="t p" id="p16" style="left:1041px;top:383px;color:#d4d4d4;font-style:italic;font-size:14px;letter-spacing:-.5px">fx</span>
<div class="a dv" style="top:423px"></div>
<span class="t p" id="p17" style="left:1044px;top:441px;color:#b6b6b6">快速動作</span>
<div class="a cb" style="left:1044px;top:462px;width:220px;height:21px"></div>
<span class="t p b" id="p18" style="left:1044px;top:467px;width:220px;text-align:center">產生向量</span>
<svg width="1280" height="735" viewBox="0 0 1280 735" style="left:0;top:0">
 <!-- reference point -->
 <g fill="none" stroke="#dcdcdc" stroke-width="1">
  <path d="M1046.500 181.500 H1060.500 V195.500 H1046.500 Z" stroke-width=".9"/>
  <g fill="#535353">
  <rect x="1044.500" y="179.500" width="4" height="4"/><rect x="1051.500" y="179.500" width="4" height="4"/><rect x="1058.500" y="179.500" width="4" height="4"/>
  <rect x="1044.500" y="186.500" width="4" height="4"/><rect x="1058.500" y="186.500" width="4" height="4"/>
  <rect x="1044.500" y="193.500" width="4" height="4"/><rect x="1051.500" y="193.500" width="4" height="4"/><rect x="1058.500" y="193.500" width="4" height="4"/>
  </g>
  <rect x="1051.500" y="186.500" width="4" height="4" fill="#fff"/>
 </g>
 <!-- link broken -->
 <g fill="none" stroke="#d4d4d4" stroke-width="1.500">
  <path d="M1250.200 188 v-2.800 a3.400 3.400 0 0 1 6.800 0 v2.800 M1257 190.500 v2.200 a3.400 3.400 0 0 1 -6.800 0 v-2.200" stroke-width="1.900"/>
  <path d="M1246.300 181 L1260.600 195.200" stroke-width="1.500"/>
 </g>
 <!-- angle -->
 <path d="M1079.800 226.500 H1069.800 L1076.800 219" fill="none" stroke="#d8d8d8" stroke-width="1.300"/>
 <path d="M1074.500 222 a5 5 0 0 1 2.300 4.500" fill="none" stroke="#d8d8d8" stroke-width="1"/>
 <path d="M1126.500 224.300 l3.300 3.300 l3.300 -3.300" fill="none" stroke="#767676" stroke-width="1.300"/>
 <!-- flip h -->
 <path d="M1181.700 221.700 v9.600 l4 -4.800z" fill="none" stroke="#d4d4d4" stroke-width="1.100"/>
 <path d="M1193.800 221.200 v10.600 l-4.600 -5.300z" fill="#d4d4d4"/>
 <path d="M1187.600 219.500 v14" stroke="#d4d4d4" stroke-width="1" stroke-dasharray="1 1"/>
 <!-- flip v -->
 <path d="M1205.600 220.200 h10.200 l-5.100 4.800z" fill="#d4d4d4"/>
 <path d="M1206.200 232.500 h9 l-4.500 -4z" fill="none" stroke="#d4d4d4" stroke-width="1.100"/>
 <path d="M1204.500 226.500 h12.500" stroke="#d4d4d4" stroke-width="1" stroke-dasharray="1 1"/>
 <!-- dots -->
 <g fill="#d0d0d0"><circle cx="1246.800" cy="246.800" r="1.700"/><circle cx="1252" cy="246.800" r="1.700"/><circle cx="1257.200" cy="246.800" r="1.700"/>
 <circle cx="1241.800" cy="413.600" r="1.700"/><circle cx="1247" cy="413.600" r="1.700"/><circle cx="1252.200" cy="413.600" r="1.700"/></g>
 <!-- stroke swatch inner -->
 <rect x="1049.500" y="325.500" width="7" height="7" fill="#666" stroke="#fff" stroke-width="1.200"/>
 <!-- opacity checker -->
 <rect x="1045.500" y="349.500" width="15.300" height="15.300" fill="#626262" stroke="#a8a8a8" stroke-width="1"/>
 <g fill="#787878"><rect x="1046" y="350" width="4" height="4"/><rect x="1054" y="350" width="4" height="4"/><rect x="1050" y="354" width="4" height="4"/><rect x="1058" y="354" width="3" height="4"/><rect x="1046" y="358" width="4" height="4"/><rect x="1054" y="358" width="4" height="4"/><rect x="1050" y="362" width="4" height="3"/><rect x="1058" y="362" width="3" height="3"/></g>
 <!-- chevrons -->
 <g fill="none" stroke="#e8e8e8" stroke-width="1.800" stroke-linecap="round" stroke-linejoin="round">
  <path d="M1134.500 327 l3.500 -3.500 l3.500 3.500"/><path d="M1134.500 332.500 l3.500 3.500 l3.500 -3.500"/>
  <path d="M1184 328 l3.500 3.500 l3.500 -3.500"/>
  <path d="M1185.500 353.500 l3.500 4 l-3.500 4"/>
 </g>
 <path d="M1052.300 394.200 h3 l-1.500 1.800z" fill="#d4d4d4"/>
</svg>
</body>
</html>
